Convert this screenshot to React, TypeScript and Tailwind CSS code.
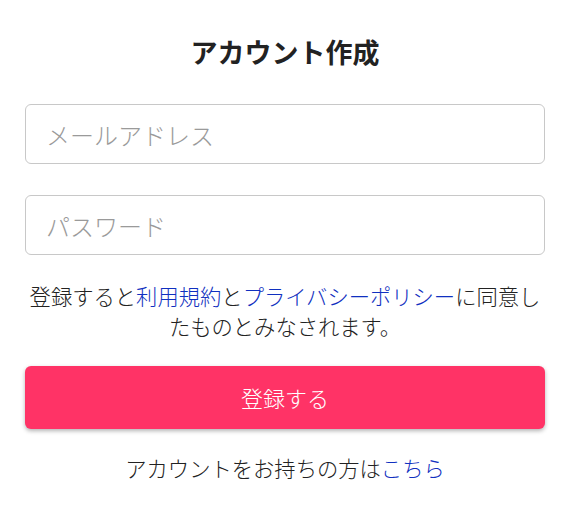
export default function App() {
  return (
    <div
      className="min-h-[517px] w-[570px] bg-white px-[25px] pt-[33px] text-[#222]"
      style={{ fontFamily: '"Noto Sans CJK JP", "Noto Sans", sans-serif' }}
    >
      <h1 className="text-center text-[27px] font-bold leading-[38px] text-[#222]">アカウント作成</h1>

      <form className="mt-[33px] flex flex-col">
        <input
          type="email"
          placeholder="メールアドレス"
          className="h-[60px] w-full rounded-[6px] border border-[#c8c8c8] bg-white px-[20px] text-[24px] font-light text-[#222] outline-none placeholder:text-[#9a9a9a]"
        />
        <input
          type="password"
          placeholder="パスワード"
          className="mt-[31px] h-[60px] w-full rounded-[6px] border border-[#c8c8c8] bg-white px-[20px] text-[24px] font-light text-[#222] outline-none placeholder:text-[#9a9a9a]"
        />

        <p className="mt-[26px] text-center text-[21.3px] font-light leading-[30px] text-[#222]">
          登録すると<a className="text-[#1030c0]">利用規約</a>と<a className="text-[#1030c0]">プライバシーポリシー</a>に同意し
          <br />
          たものとみなされます。
        </p>

        <button
          type="button"
          className="mt-[25px] h-[63px] w-full rounded-[6px] bg-[#ff3366] text-[22px] font-light text-white shadow-[0_2px_4px_rgba(0,0,0,0.3)]"
        >
          登録する
        </button>
      </form>

      <p className="mt-[24px] text-center text-[21.3px] font-light leading-[30px] text-[#222]">
        アカウントをお持ちの方は<a className="text-[#1030c0]">こちら</a>
      </p>
    </div>
  );
}
